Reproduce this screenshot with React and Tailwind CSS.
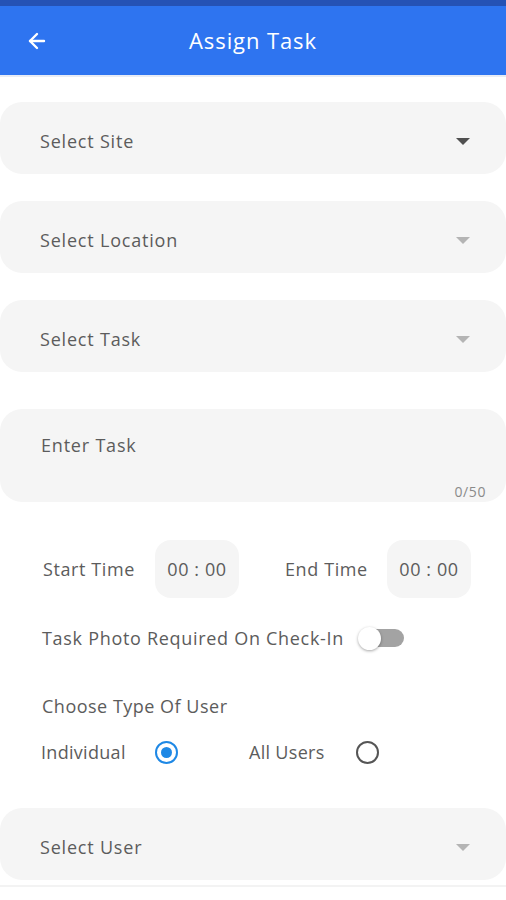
import { ArrowLeft } from "lucide-react";

const font = { fontFamily: '"Open Sans", "Noto Sans", sans-serif' };

function Caret({ dark }) {
  return (
    <svg width="16" height="9" viewBox="0 0 16 9" className="shrink-0">
      <path d="M1 1 L15 1 L8 8 Z" fill={dark ? "#505050" : "#b4b4b4"} />
    </svg>
  );
}

function SelectBox({ label, dark, className = "" }) {
  return (
    <div
      className={`h-[72px] w-full rounded-[22px] bg-[#f5f5f5] flex items-center justify-between pl-10 pr-[35px] pt-[6px] ${className}`}
    >
      <span className="text-[18px] tracking-[0.8px] text-[#5c5c5c]">{label}</span>
      <Caret dark={dark} />
    </div>
  );
}

function TimeBox() {
  return (
    <div className="h-[58px] w-[84px] rounded-[16px] bg-[#f5f5f5] flex items-center justify-center text-[18px] text-[#5c5c5c] tracking-[0.6px]">
      00 : 00
    </div>
  );
}

export default function App() {
  return (
    <div className="w-[506px] h-[900px] bg-white overflow-hidden" style={font}>
      {/* HEADER */}
      <div className="h-[75px] bg-[#2e74f0] border-t-[6px] border-[#2552b5] flex items-center relative">
        <ArrowLeft className="absolute left-[25px] text-white" size={24} strokeWidth={2.4} />
        <div className="w-full text-center text-white text-[22px] tracking-[0.9px]">Assign Task</div>
      </div>
      <div className="h-[2px] bg-[#e8ecf5]" />

      {/* FORM */}
      <div className="flex flex-col">
        <SelectBox label="Select Site" dark className="mt-[25px]" />
        <SelectBox label="Select Location" className="mt-[27px]" />
        <SelectBox label="Select Task" className="mt-[27px]" />

        <div className="mt-[37px] h-[93px] w-full rounded-[22px] bg-[#f5f5f5] relative pl-[41px] pt-[23px]">
          <span className="text-[18px] tracking-[0.8px] text-[#5c5c5c]">Enter Task</span>
          <span className="absolute right-[20px] bottom-[0px] text-[14px] tracking-[0.6px] text-[#8a8a8a]">0/50</span>
        </div>

        {/* TIMES */}
        <div className="mt-[38px] flex items-center pl-[43px]">
          <span className="text-[18px] tracking-[0.6px] text-[#5c5c5c] w-[112px]">Start Time</span>
          <TimeBox />
          <span className="text-[18px] tracking-[0.6px] text-[#5c5c5c] ml-[46px] w-[102px]">End Time</span>
          <TimeBox />
        </div>

        {/* TOGGLE */}
        <div className="mt-[20px] flex items-center pl-[42px] h-[40px]">
          <span className="text-[18px] tracking-[0.7px] text-[#5c5c5c]">Task Photo Required On Check-In</span>
          <div className="relative ml-[14px] w-[46px] h-[24px] flex items-center">
            <div className="absolute left-[8px] right-0 h-[18px] rounded-full bg-[#a3a3a3]" />
            <div className="absolute left-0 w-[23px] h-[23px] rounded-full bg-white shadow-[0_1px_3px_rgba(0,0,0,0.35)]" />
          </div>
        </div>

        <div className="mt-[33px] pl-[42px] text-[18px] tracking-[0.5px] text-[#5c5c5c] h-[30px] flex items-center">
          Choose Type Of User
        </div>

        {/* RADIOS */}
        <div className="mt-[14px] flex items-center pl-[41px] h-[34px]">
          <span className="text-[18px] tracking-[0.3px] text-[#5c5c5c] w-[114px]">Individual</span>
          <div className="w-[23px] h-[23px] rounded-full border-[2.5px] border-[#1e88e5] flex items-center justify-center">
            <div className="w-[11px] h-[11px] rounded-full bg-[#1e88e5]" />
          </div>
          <span className="text-[18px] tracking-[0.3px] text-[#5c5c5c] ml-[71px] w-[107px]">All Users</span>
          <div className="w-[23px] h-[23px] rounded-full border-[2px] border-[#555]" />
        </div>

        <SelectBox label="Select User" className="mt-[39px]" />
        <div className="mt-[5px] h-[2px] bg-[#f3f3f3]" />
      </div>
    </div>
  );
}
